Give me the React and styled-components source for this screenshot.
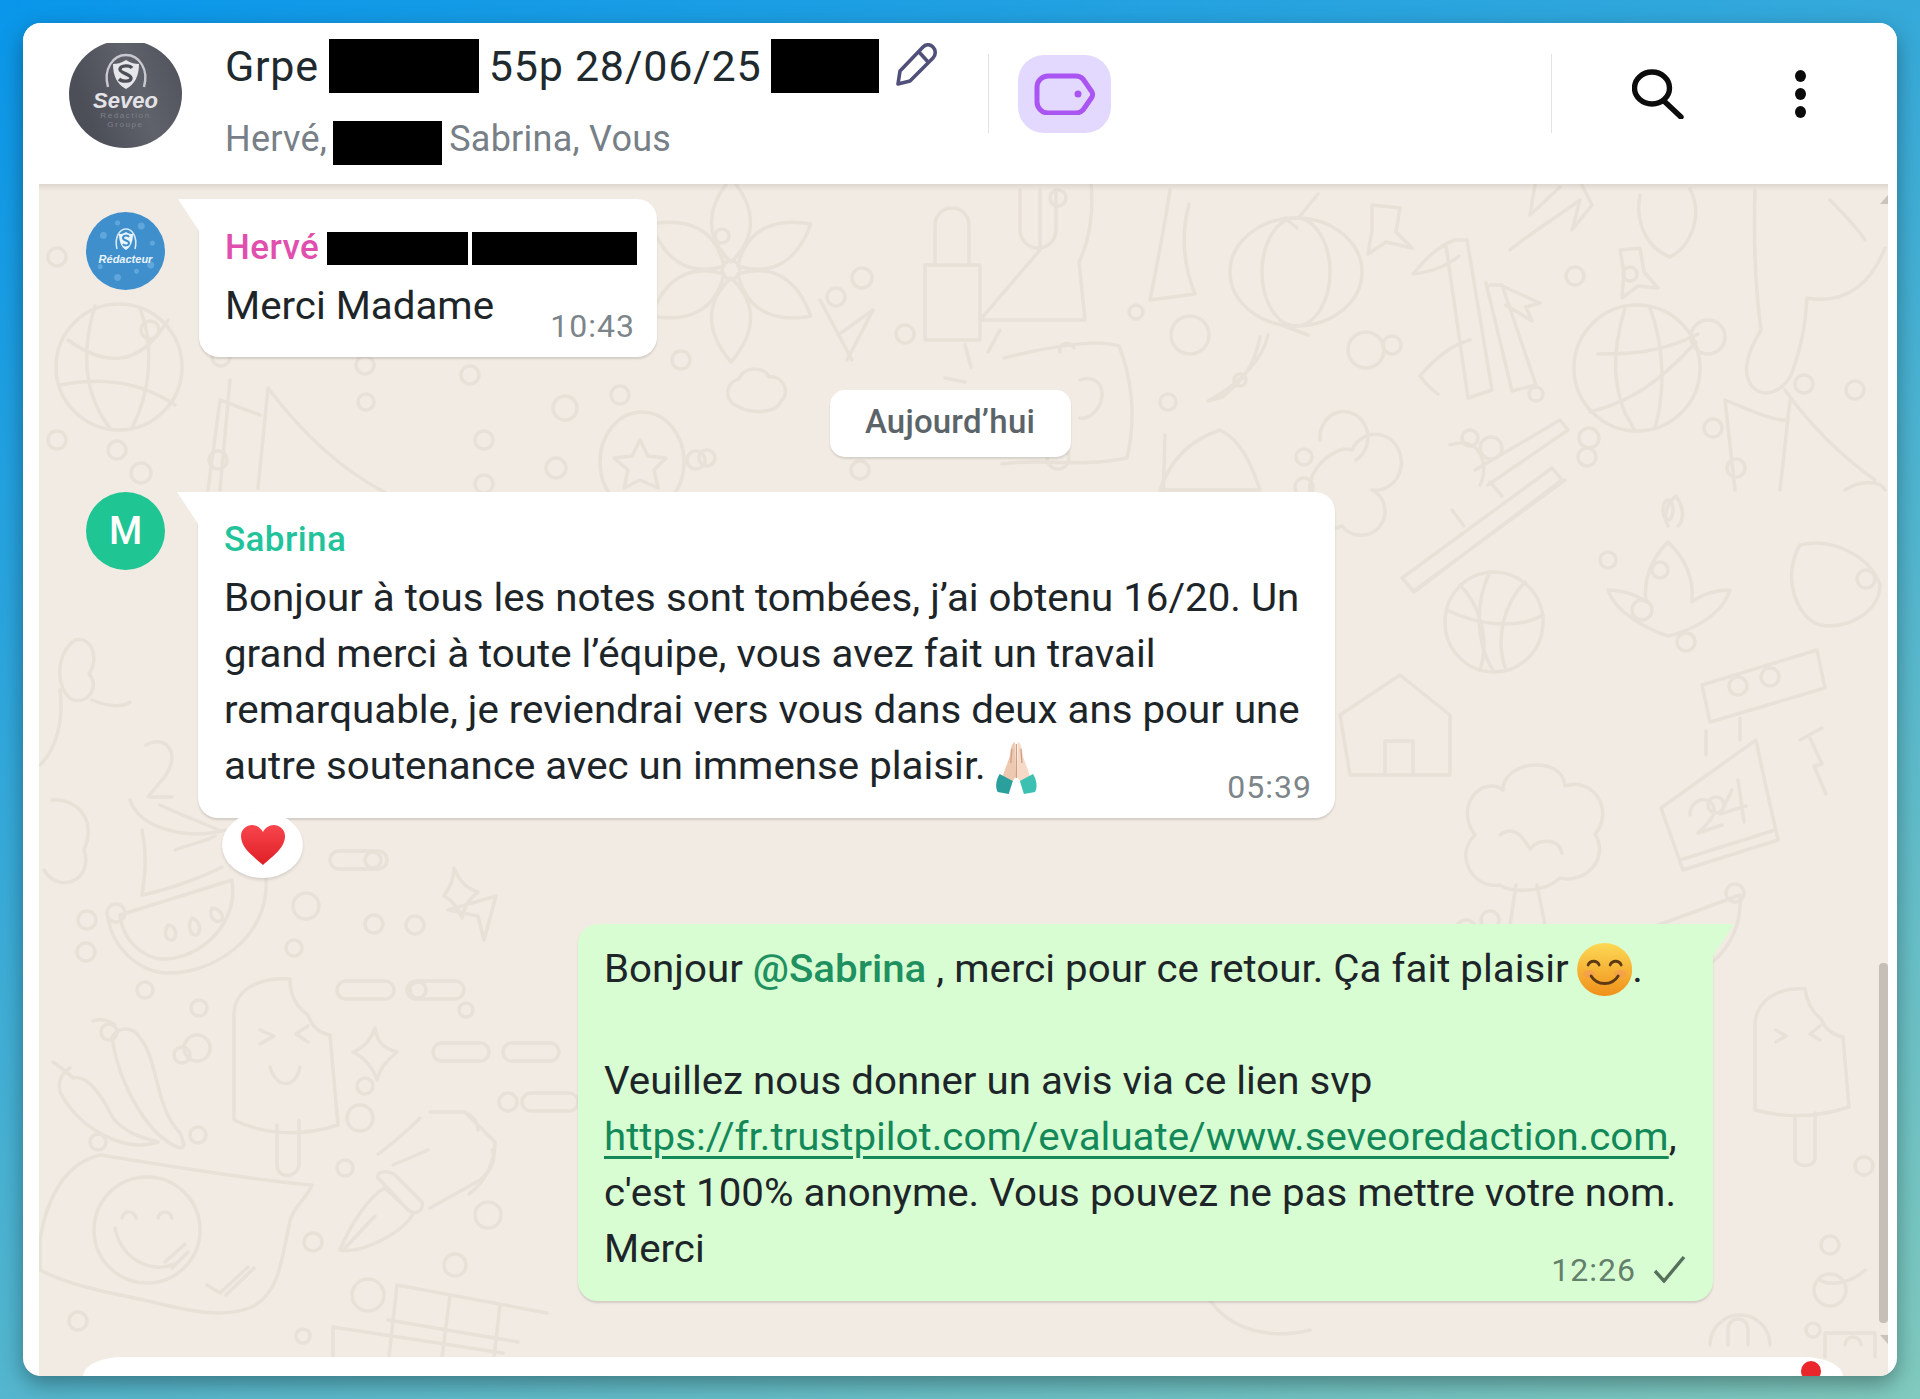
import React from "react";
import styled, { createGlobalStyle } from "styled-components";

const Global = createGlobalStyle`
  html, body { margin: 0; padding: 0; }
  body { font-family: Roboto, "Noto Sans", sans-serif; color: #1d2529; }
  * { box-sizing: border-box; }
`;

const Page = styled.div`
  height: 1399px;
  padding: 23px;
  background: linear-gradient(157deg, #0996ea 0%, #80cabe 100%);
  overflow: hidden;
`;
const Card = styled.main`
  height: 1353px;
  display: flex;
  flex-direction: column;
  padding: 0 9px 0 16px;
  background: #fff;
  border-radius: 18px;
  overflow: hidden;
  box-shadow: 0 8px 22px rgba(0, 0, 0, 0.35);
`;
const Header = styled.header`
  flex: 0 0 161px;
  display: flex;
  align-items: flex-start;
  margin: 0 -9px 0 -16px;
  padding: 0 91px 0 46px;
  background: #fff;
`;
const LogoClip = styled.div`
  flex: 0 0 113px;
  height: 105px;
  margin-top: 20px;
  overflow: hidden;
`;
const SeveoLogo = styled.div`
  width: 113px;
  height: 108px;
  margin-top: -3px;
  padding-top: 13px;
  border-radius: 50%;
  display: flex;
  flex-direction: column;
  align-items: center;
  background: linear-gradient(70deg, #4d4f58 20%, #5f616b 60%, #4f515a 100%);
`;
const SeveoName = styled.span`
  font: italic 700 22px/20px "Liberation Sans", sans-serif;
  color: #e4e4e8;
  margin-top: 2px;
`;
const SeveoSmall = styled.span`
  font: 400 8px/9px "Liberation Sans", sans-serif;
  letter-spacing: 1.6px;
  color: #7f818b;
`;
const TitleCol = styled.div`
  flex: 0 0 715px;
  min-width: 0;
  margin-left: 43px;
  padding-top: 16px;
`;
const TitleRow = styled.div`
  display: flex;
  align-items: center;
  height: 54px;
  font-size: 43px;
  letter-spacing: 0.75px;
  line-height: 54px;
  color: #202a2e;
  white-space: nowrap;
`;
const SubRow = styled.div`
  display: flex;
  align-items: flex-start;
  height: 44px;
  margin-top: 28px;
  font-size: 36px;
  letter-spacing: 0.25px;
  line-height: 36px;
  color: #778087;
  white-space: nowrap;
`;
const Redact = styled.span`
  flex: none;
  display: block;
  width: ${(p) => p.$w}px;
  height: ${(p) => p.$h}px;
  margin: 0 ${(p) => p.$mr ?? 10}px 0 ${(p) => p.$ml ?? 10}px;
  background: #000;
`;
const PencilIcon = styled.svg`
  flex: none;
  margin: -2px 0 0 16px;
`;
const Actions = styled.div`
  flex: 1;
  height: 79px;
  margin-top: 31px;
  display: flex;
  align-items: center;
`;
const Divider = styled.span`
  flex: none;
  width: 1px;
  height: 79px;
  background: #e1e3e4;
  margin-left: ${(p) => p.$ml || 0}px;
`;
const TagButton = styled.span`
  flex: none;
  width: 93px;
  height: 78px;
  margin-left: 29px;
  border-radius: 26px;
  background: #e3d9ff;
  display: flex;
  align-items: center;
  justify-content: center;
`;
const Spacer = styled.span`
  flex: 1;
`;
const SearchIcon = styled.svg`
  flex: none;
  margin-left: 80px;
`;
const Dots = styled.span`
  flex: none;
  margin-left: 111px;
  display: flex;
  flex-direction: column;
  gap: 6px;
  & > i {
    display: block;
    width: 11px;
    height: 12px;
    border-radius: 50%;
    background: #0b0b0b;
  }
`;

const Chat = styled.section`
  position: relative;
  flex: 1;
  overflow: hidden;
  display: flex;
  flex-direction: column;
  padding-top: 15px;
  background: #f1ebe4;
  &::after {
    content: "";
    position: absolute;
    left: 0;
    right: 0;
    top: 0;
    height: 7px;
    background: linear-gradient(rgba(90, 80, 70, 0.13), rgba(90, 80, 70, 0));
  }
`;
const Doodle = styled.svg`
  position: absolute;
  left: 0;
  top: 0;
  width: 1849px;
  height: 1192px;
  fill: none;
  stroke: #e8e1d8;
  stroke-width: 3.5;
  stroke-linecap: round;
  stroke-linejoin: round;
`;
const Row = styled.div`
  position: relative;
  display: flex;
  align-items: flex-start;
  margin-top: ${(p) => p.$mt || 0}px;
  padding-left: 47px;
`;
const Avatar = styled.div`
  flex: none;
  width: 79px;
  height: 78px;
  margin-top: ${(p) => p.$mt || 0}px;
  margin-right: ${(p) => p.$mr}px;
  border-radius: 50%;
  display: flex;
  flex-direction: column;
  align-items: center;
  justify-content: center;
  background: ${(p) => p.$bg};
  color: #fff;
`;
const SpeckledAvatar = styled(Avatar)`
  background:
    radial-gradient(circle at 22% 30%, #5ea6db 0 3px, transparent 4px),
    radial-gradient(circle at 40% 14%, #5ea6db 0 2px, transparent 3px),
    radial-gradient(circle at 70% 18%, #5ea6db 0 3px, transparent 4px),
    radial-gradient(circle at 84% 40%, #5ea6db 0 2px, transparent 3px),
    radial-gradient(circle at 18% 70%, #5ea6db 0 2px, transparent 3px),
    radial-gradient(circle at 40% 84%, #5ea6db 0 3px, transparent 4px),
    radial-gradient(circle at 64% 76%, #5ea6db 0 2px, transparent 3px),
    radial-gradient(circle at 82% 68%, #5ea6db 0 3px, transparent 4px),
    #3f8fcc;
`;
const AvatarInitial = styled.span`
  font-size: 38px;
  font-weight: 500;
  line-height: 1;
`;
const RedacteurText = styled.span`
  font: italic 700 11px/12px "Liberation Sans", sans-serif;
  color: #eaf4fb;
  margin-bottom: 10px;
`;
const Bubble = styled.article`
  position: relative;
  width: ${(p) => p.$w}px;
  padding: ${(p) => p.$pt || 28}px 26px ${(p) => p.$pb || 24}px;
  border-radius: 20px;
  border-top-left-radius: ${(p) => (p.$out ? "20px" : "0")};
  border-top-right-radius: ${(p) => (p.$out ? "0" : "20px")};
  background: ${(p) => (p.$out ? "#d9fdd3" : "#fff")};
  box-shadow: 0 2px 2px rgba(60, 50, 40, 0.16);
  &::before {
    content: "";
    position: absolute;
    top: 0;
    ${(p) => (p.$out ? "left: 100%;" : "right: 100%;")}
    width: 21px;
    height: 32px;
    background: inherit;
    clip-path: ${(p) =>
      p.$out
        ? "polygon(0 0, 100% 0, 0 100%)"
        : "polygon(0 0, 100% 0, 100% 100%)"};
  }
`;
const OutRow = styled.div`
  display: flex;
  justify-content: flex-end;
  position: relative;
  margin-top: 106px;
  padding-right: 175px;
`;
const Sender = styled.div`
  display: flex;
  align-items: center;
  height: 40px;
  margin-bottom: 10px;
  font-size: 35px;
  letter-spacing: 0.4px;
  font-weight: 500;
  line-height: 40px;
  color: ${(p) => p.$c};
`;
const Body = styled.div`
  font-size: 38px;
  line-height: 56px;
  white-space: pre-line;
  color: #1d2529;
  transform: scaleX(1.06);
  transform-origin: left center;
`;
const InlineEmoji = styled.svg`
  vertical-align: ${(p) => p.$va}px;
  margin-left: ${(p) => p.$ml}px;
`;
const Meta = styled.span`
  position: absolute;
  right: ${(p) => p.$r}px;
  bottom: 11px;
  display: flex;
  align-items: center;
  font-size: 32px;
  letter-spacing: 1px;
  line-height: 40px;
  color: ${(p) => p.$c || "#7c8589"};
`;
const CheckIcon = styled.svg`
  margin-left: 17px;
  margin-top: -2px;
`;
const Mention = styled.span`
  font-weight: 500;
  color: #1f9160;
`;
const Link = styled.a`
  color: #13895a;
  text-decoration: underline;
  text-decoration-thickness: 3px;
  text-underline-offset: 6px;
`;
const DateRow = styled.div`
  position: relative;
  display: flex;
  justify-content: center;
  margin: 33px 0 35px;
  padding-right: 27px;
`;
const DateChip = styled.span`
  width: 241px;
  height: 67px;
  border-radius: 15px;
  background: #fff;
  font-size: 33px;
  letter-spacing: 0.2px;
  font-weight: 500;
  line-height: 64px;
  text-align: center;
  color: #5b6469;
  box-shadow: 0 2px 2px rgba(60, 50, 40, 0.14);
`;
const Reaction = styled.span`
  position: absolute;
  left: 24px;
  top: calc(100% - 6px);
  width: 81px;
  height: 66px;
  border-radius: 50%;
  background: #fff;
  display: flex;
  align-items: center;
  justify-content: center;
  box-shadow: 0 2px 3px rgba(60, 50, 40, 0.14);
`;
const ScrollArrow = styled.span`
  position: absolute;
  right: 0;
  top: ${(p) => p.$top}px;
  width: 8px;
  height: 9px;
  background: #c9c3bb;
  clip-path: ${(p) =>
    p.$down ? "polygon(0 0, 100% 0, 100% 100%)" : "polygon(100% 0, 100% 100%, 0 100%)"};
`;
const ScrollThumb = styled.span`
  position: absolute;
  right: 0;
  top: 779px;
  width: 9px;
  height: 360px;
  border-radius: 4px;
  background: #c5bfb8;
`;
const Composer = styled.div`
  position: absolute;
  left: 44px;
  right: 45px;
  bottom: 0;
  height: 19px;
  border-radius: 40px 40px 0 0 / 19px 19px 0 0;
  background: #fff;
`;
const RedDot = styled.span`
  position: absolute;
  right: 22px;
  top: 4px;
  width: 20px;
  height: 20px;
  border-radius: 50%;
  background: #e8262c;
`;

const circles = [
  [57,257,9],[57,440,9],[141,473,10],[117,450,9],[218,460,9],[150,330,9],[221,357,9],[365,365,9],[366,402,8],
  [395,235,7],[365,330,9],[470,375,9],[484,440,9],[484,484,9],[556,468,10],[565,408,12],[620,395,9],[696,460,9],
  [681,360,9],[707,458,8],[722,236,7],[862,278,10],[846,405,9],[836,297,9],[905,334,9],[860,470,9],
  [1058,198,8],[1136,312,7],[1190,335,19],[1058,458,11],[1168,402,8],[1304,457,8],[1392,345,9],[1366,350,18],
  [1304,487,9],[1491,448,11],[1536,394,7],[1589,438,10],[1575,276,9],[1630,274,7],[1708,337,17],[1713,428,9],
  [1804,384,9],[1736,468,9],[1855,390,9],[1866,579,9],[1470,438,8],[1587,457,9],[1686,642,9],[1608,560,8],
  [1240,380,6],[1660,570,8],[1642,610,10],[1466,930,10],[1716,805,8],[1735,893,9],[1480,1130,9],[1490,920,9],
  [116,913,9],[87,920,9],[86,952,9],[182,1055,8],[109,1032,8],[306,906,13],[294,948,8],[145,990,8],[199,1008,8],
  [98,1142,8],[198,1135,8],[197,1048,13],[466,1010,7],[373,860,8],[374,924,9],[415,925,9],[418,990,8],
  [365,1086,8],[360,1118,13],[345,1168,8],[508,1102,9],[78,1321,9],[313,1242,9],[368,1295,16],
  [455,1265,11],[488,1215,13],[303,1336,7],[1830,1245,9],[1813,1330,7],[1864,1166,9],[1830,1290,16],[1615,1170,8],
  [1420,1230,7],[1270,1040,7],[1110,1040,8],[1020,1040,7],[845,1040,9],
];
const pills = [
  [330,860,57],[337,990,57],[407,990,57],[433,1052,56],[503,1052,56],[522,1102,56],[1500,1120,56],[1590,1045,50],
];

function Doodles() {
  return (
    <Doodle viewBox="39 184 1849 1192" aria-hidden="true">
      {circles.map(([x, y, r], i) => (
        <circle key={i} cx={x} cy={y} r={r} />
      ))}
      {pills.map(([x, y, w], i) => (
        <rect key={i} x={x} y={y - 9} width={w} height={18} rx={9} />
      ))}
      {/* left globe */}
      <ellipse cx="119" cy="367" rx="63" ry="63" />
      <path d="M68 340c35 25 70 30 100-20M60 385c40-8 80-4 115 20M95 306c-15 50-10 90 15 122M140 308c15 40 10 85-8 120" />
      {/* flower */}
      {[0, 60, 120, 180, 240, 300].map((r) => (
        <path key={r} d="M731 262c-28-26-24-56 0-84 24 28 28 58 0 84z" transform={`rotate(${r} 731 270)`} />
      ))}
      <circle cx="731" cy="270" r="9" />
      {/* cactus pot and boot */}
      <path d="M925 265h55v75h-55zM935 265v-40a17 17 0 0 1 34 0v40M1040 190v60l-60 70h105l-6-58c10-20 15-50 12-78M1020 190v40a18 18 0 0 0 36 0v-40" />
      <path d="M1170 190c-6 40-14 80-20 110l45-6c-12-30-14-60-6-90" />
      {/* lantern */}
      <ellipse cx="1296" cy="272" rx="66" ry="54" />
      <ellipse cx="1296" cy="272" rx="34" ry="54" />
      <path d="M1285 218l12 10M1300 216l18-22M1282 325l26 10M1268 335c-5 25-30 50-60 66l14-4c20-15 32-30 38-60" />
      <path d="M1372 205l28 3-4 24 16 16-26-6-18 12 4-24z" />
      {/* bamboo */}
      <path d="M1455 240l12 0 25 150 -24 8-22-152M1490 285l12 0 34 100-24 6-26-108M1455 240c-18 6-32 22-42 34 18-2 34-8 46-18M1470 340c-22 6-40 24-50 36 6 8 12 14 18 18M1500 285l40 18-14 4 6 14-26-16" />
      {/* right globe */}
      <ellipse cx="1637" cy="368" rx="63" ry="63" />
      <path d="M1598 354c30 0 60 0 100-20M1590 412c40-10 70-30 106-70M1625 308c-15 50-10 80 0 105l10 18M1650 308c15 40 15 85 5 120" />
      {/* leaf, stocking */}
      <path d="M1510 250c25-20 50-35 70-50l-8 30 20-25-10-20M1535 185l-5 30 30-28" />
      <path d="M1755 190c-2 60 2 110 6 140-12 20-20 40-10 55 12 16 35 6 42-15 8-25 12-40 14-72 30 5 60-5 78-50M1830 200c10 10 25 25 35 40" />
      <path d="M1640 195c-6 30 10 55 30 62 20-10 34-40 20-68" />
      <path d="M1620 250l20-2 4 24 14 16-20-2-16 12 2-26z" />
      {/* triangle notes */}
      <path d="M208 490l12-90 40 15M268 388l-10 100M268 388c30 40 70 80 118 105M230 380l-10 110" />
      {/* star circle */}
      <ellipse cx="642" cy="462" rx="42" ry="50" />
      <path d="M640 440l8 16 18 2-12 12 4 18-18-8-16 8 4-18-14-12 18-2z" />
      {/* cloud */}
      <path d="M735 405a14 14 0 0 1 4-26c4-12 24-14 30-2 14-2 22 16 12 24-4 12-30 14-46 4z" />
      {/* cross and rays */}
      <path d="M838 335l35-25 -26 50M820 300l32 60M965 345l6 22M1000 330l-12 22M945 378l20 4" />
      {/* radio near date */}
      <path d="M1004 358c40-10 90-20 115-12 12 30 18 70 8 112-50 10-90 0-125 6M1060 352c-3-8 10-12 14-4M1080 380c10-4 22 0 22 14s-12 26-22 24" />
      {/* tent + hand */}
      <path d="M1165 435l-2 65M1220 430c-30 10-50 30-60 60h100c-10-30-20-50-40-60z" />
      <path d="M1320 440a24 26 0 1 1 36 20M1352 450a26 28 0 1 1 20 40 24 24 0 1 1-30 36c-20 10-40-20-30-50 10-20 30-30 40-26z" />
      {/* chopsticks */}
      <path d="M1402 578l150-110 10 12-148 112zM1415 590l150-110M1452 510l12 16M1490 482l12 14" />
      <path d="M1450 445c30-10 40 20 30 40M1475 470l85-50 8 10-80 55" />
      {/* note right */}
      <path d="M1725 400l10 90M1725 400c25 10 45 20 60 20M1785 390c25 35 55 65 90 90M1790 400l-10 90" />
      <path d="M1845 490c15-10 35-10 40 0" />
      {/* basket ball */}
      <ellipse cx="1494" cy="622" rx="49" ry="50" />
      <path d="M1447 610c30 15 70 20 96 5M1490 572c-15 30-15 70 4 100M1460 585c20 20 30 55 20 85M1525 582c-20 20-30 55-20 85" />
      {/* lotus */}
      <path d="M1608 590c10 30 60 46 60 46s50-10 62-46c-15 0-30 5-38 12 2-25-8-45-24-60-15 15-25 35-22 60-10-8-25-12-38-12z" />
      <path d="M1668 526c-6-10 0-24 8-30 6 8 10 22 2 30" />
      <ellipse cx="1668" cy="510" rx="5" ry="10" />
      {/* right fruit */}
      <path d="M1800 545c30-8 70 10 80 40 0 25-30 45-60 40-25-8-38-50-20-80z" />
      {/* domino */}
      <path d="M1702 685l115-35 8 38-115 34z" />
      <circle cx="1738" cy="686" r="9" /><circle cx="1770" cy="677" r="9" />
      {/* house */}
      <path d="M1340 715l60-40 50 40v60h-100zM1385 775v-34h28v34" />
      {/* big flower */}
      <path d="M1510 925l6-40M1545 925l-8-40M1500 885c-28 4-46-30-25-50-22-30 8-60 28-45 0-30 60-35 62-4 28-10 50 25 30 48 15 25-10 50-35 44-15 15-50 15-60 7z" />
      <path d="M1500 835c15-12 25 6 30 14 8-10 28-12 32 4" />
      {/* calendar 24 */}
      <path d="M1661 808l95-68c8 40 20 90 22 100l-95 30zM1680 860l95-30M1706 755v-24M1740 740v-22" />
      <path d="M1690 815c0-18 22-20 24-6 1 8-8 16-16 24l24-8M1732 790l-12 24 26-8M1738 780l6 42" />
      <path d="M1810 738l12 26-8 2 12 28M1800 740l22-12" />
      {/* watermelon left */}
      <path d="M120 915L232 880C240 930 190 965 155 958C135 952 122 935 120 915z" />
      <path d="M266 878C270 940 210 975 165 973C135 970 112 945 108 918" />
      <path d="M168 925c-6 10 0 18 6 14 4-6 0-14-6-14zM192 918c-6 10 0 20 6 16 4-6 0-14-6-16zM212 908c-4 10 4 16 10 12 2-6-4-12-10-12z" />
      {/* watermelon right */}
      <path d="M1590 950l150-55c4 60-50 90-90 95-35 0-60-20-60-40zM1640 942l-5 14M1680 925l-6 14" />
      {/* popsicle */}
      <path d="M234 1120V1015c0-25 24-38 56-36 0 16 6 28 18 36 4 12 12 18 22 20l8 90c-30 10-70 12-104-5zM277 1125v40c0 14 20 14 22 0v-45" />
      <path d="M260 1030l14 6-14 8M308 1026l-12 8 12 8M270 1067c6 22 26 22 30 0" />
      {/* popsicle right */}
      <path d="M1755 1110v-85c0-25 24-38 50-36 2 14 8 24 16 30 4 10 12 16 22 18l6 70c-30 10-60 12-94 3zM1795 1118v40c0 10 20 10 20 0v-45" />
      <path d="M1776 1030l10 6-10 6M1820 1026l-10 8 10 6" />
      {/* chillies */}
      <path d="M112 1038c4-10 20-14 28 0 18 20 15 70 40 95 5 12 5 14 0 15-30-10-60-60-68-110zM115 1025c-8-6-16-6-22-4" />
      <path d="M53 1062c8 6 14 10 20 16 15-4 30 20 40 40 12 15 30 20 45 24-35 12-80-15-98-50-2-10 0-18 10-24" />
      {/* sparkles */}
      <path d="M375 1028c2 14 8 20 22 24-10 8-18 18-20 28-4-12-12-22-24-28 10-4 18-12 22-24z" />
      <path d="M454 868c6 14 12 20 24 24-8 6-14 14-16 26-4-10-10-18-18-22 6-8 10-18 10-28z" />
      {/* plane */}
      <path d="M448 910l48-14-12 44-6-24z" />
      {/* pie, cake left */}
      <path d="M142 830c6 30 2 50 0 65 30-6 65-20 80-28M160 805c20 10 50 20 60 26M175 850c15-6 30-8 40-14" />
      <path d="M52 800c25-2 45 20 32 50 10 30-25 45-40 20" />
      {/* 2 candle */}
      <path d="M146 745c16-10 36 4 20 30l-18 22h24M130 800c10 30 60 40 95 30" />
      <path d="M75 640c18-4 24 20 14 34 10 10 2 30-16 26-16-8-20-44 2-60zM60 690c4 30-4 60-20 75M92 700c14 6 30 8 38 2" />
      {/* lower blob + smiley */}
      <path d="M40 1240c8-50 30-78 60-85 65 10 150 25 212 30-6 14-20 24-22 36-8 36-10 70-36 85-30 14-70 4-110-6-40-8-78-16-104-30z" />
      <circle cx="147" cy="1230" r="53" />
      <path d="M122 1218c2-8 12-8 14 0M158 1218c2-8 12-8 14 0M115 1228c6 30 34 46 60 36" />
      <path d="M165 1262l20-18M172 1268l16-16" />
      <path d="M207 1285l13 8 28-26M226 1295l28-27" />
      {/* nib */}
      <path d="M340 1250c10-25 30-55 45-62l28 26c-10 18-50 40-73 36zM345 1248l30-32M378 1178l30 32c8 6 16 0 14-8l-28-28c-8-4-18-2-16 4zM393 1165l35-15M430 1208l50-28c14-12 16-24 12-30" />
      {/* notebook */}
      <path d="M333 1357v-30l170 26M397 1285l-8 72M397 1285l150 28M450 1295l-8 62M500 1305l-6 52M388 1320l130 22" />
      {/* mug */}
      <path d="M420 1118c-10 10-30 28-42 36M465 1112l30 30c0 20-10 40-26 52M430 1112l34 0c10 4 14 10 14 18" />
      {/* right lower */}
      <path d="M1570 1190c20 30 30 60 20 90M1210 1300c20 30 60 40 100 30" />
      <path d="M1820 1280c10 6 30 4 45-10" />
      <path d="M1440 1250l12 8 26-24M1460 1260l26-24" />
      <path d="M1710 1345a30 30 0 1 1 60 0M1728 1345v-16a10 10 0 0 1 20 0v16M1825 1357v-24h50v24M1845 1345a8 8 0 1 1 16 0" />
    </Doodle>
  );
}

const Pray = () => (
  <InlineEmoji $va={-15} $ml={8} width="41" height="53" viewBox="0 0 43 53" preserveAspectRatio="none">
    <path d="M20 1c-3 1-4 6-5 14-2 8-6 14-7 22l8 5 5-6z" fill="#eec8b0" />
    <path d="M23 1c3 1 4 6 5 14 2 8 6 14 7 22l-8 5-5-6z" fill="#f6d9c6" />
    <path d="M21.500 3v34M17 8l-1 14M26 8l1 14" stroke="#cf9f84" strokeWidth="1.3" fill="none" />
    <path d="M5 33l13 7-4 13-11-2c-3-6-1-13 2-18z" fill="#2a9f9c" />
    <path d="M38 33l-13 7 4 13 11-2c3-6 1-13-2-18z" fill="#3cc0b2" />
  </InlineEmoji>
);
const Smile = () => (
  <InlineEmoji $va={-14} $ml={8} width="52" height="53" viewBox="0 0 55 53" preserveAspectRatio="none">
    <defs>
      <linearGradient id="sm" x1="0" y1="0" x2="0" y2="1">
        <stop offset="0" stopColor="#fdd955" />
        <stop offset="1" stopColor="#f0901a" />
      </linearGradient>
    </defs>
    <ellipse cx="27.500" cy="26.500" rx="27.500" ry="26.500" fill="url(#sm)" />
    <ellipse cx="12" cy="31" rx="6" ry="4" fill="#f49a55" opacity=".6" />
    <ellipse cx="43" cy="31" rx="6" ry="4" fill="#f49a55" opacity=".6" />
    <g fill="none" stroke="#5d3a12" strokeWidth="2.8" strokeLinecap="round">
      <path d="M11 22c2-5 9-5 11 0M33 22c2-5 9-5 11 0M14 33c6 10 21 10 27 0" />
    </g>
  </InlineEmoji>
);

export default function App() {
  return (
    <Page>
      <Global />
      <Card>
        <Header>
          <LogoClip>
            <SeveoLogo>
              <svg width="46" height="36" viewBox="0 0 46 36" fill="none">
                <path d="M5 34C0 16 10 2 23 2s23 14 18 32" stroke="#c8c9ce" strokeWidth="2.4" />
                <path d="M23 7c5 3 9 4 13 4 0 12-4 20-13 25-9-5-13-13-13-25 4 0 8-1 13-4z" fill="#e6e6ea" />
                <path d="M29 15c-2-3-11-3-12 1s11 5 11 9-9 4-12 1" stroke="#4d4f58" strokeWidth="3.4" />
              </svg>
              <SeveoName>Seveo</SeveoName>
              <SeveoSmall>Rédaction</SeveoSmall>
              <SeveoSmall>Groupe</SeveoSmall>
            </SeveoLogo>
          </LogoClip>
          <TitleCol>
            <TitleRow>
              Grpe
              <Redact $w={150} $h={54} />
              55p 28/06/25
              <Redact $w={108} $h={54} $mr={0} />
              <PencilIcon width="43" height="44" viewBox="0 0 43 44" fill="none" stroke="#50507a" strokeWidth="3.6" strokeLinejoin="round">
                <path d="M3 41l2-13L28 4c3-3 7-3 10 0s3 8 0 11L15 38z" />
                <path d="M24 9l10 11" />
              </PencilIcon>
            </TitleRow>
            <SubRow>
              Hervé,
              <Redact $w={109} $h={44} $ml={6} $mr={7} />
              Sabrina, Vous
            </SubRow>
          </TitleCol>
          <Actions>
            <Divider $ml={48} />
            <TagButton>
              <svg width="62" height="42" viewBox="0 0 62 42" fill="none" stroke="#aa55f2" strokeWidth="5" strokeLinejoin="round">
                <path d="M14 3h28c3 0 5 1 7 3l9 13c1 2 1 3 0 5l-9 13c-2 2-4 3-7 3H14C8 40 3 35 3 29V14C3 8 8 3 14 3z" />
                <circle cx="44" cy="21" r="3.5" fill="#aa55f2" stroke="none" />
              </svg>
            </TagButton>
            <Spacer />
            <Divider />
            <SearchIcon width="52" height="50" viewBox="0 0 52 50" fill="none" stroke="#0c0c0c" strokeWidth="5.4" strokeLinecap="round">
              <ellipse cx="20" cy="19" rx="17.5" ry="16" />
              <path d="M32 32l17 16" />
            </SearchIcon>
            <Dots><i /><i /><i /></Dots>
          </Actions>
        </Header>
        <Chat>
          <Doodles />
          <Row>
            <SpeckledAvatar $mt={13} $mr={34}>
              <svg width="24" height="26" viewBox="0 0 24 26" fill="none">
                <path d="M3 22C0 10 6 2 12 2s12 8 9 20" stroke="#d7e9f6" strokeWidth="1.6" />
                <path d="M12 5c3 2 5 2 7 2 0 7-2 13-7 16-5-3-7-9-7-16 2 0 4 0 7-2z" fill="#e9f4fb" />
                <path d="M15 10c-1-2-6-2-6 1s6 2 6 5-5 3-6 1" stroke="#3f8fcc" strokeWidth="2" />
              </svg>
              <RedacteurText>Rédacteur</RedacteurText>
            </SpeckledAvatar>
            <Bubble $w={458} $pt={29} $pb={23}>
              <Sender $c="#e04fae">
                Hervé
                <Redact $w={141} $h={33} $mr={0} $ml={8} />
                <Redact $w={165} $h={33} $mr={0} $ml={4} />
              </Sender>
              <Body>Merci Madame</Body>
              <Meta $r={22}>10:43</Meta>
            </Bubble>
          </Row>
          <DateRow>
            <DateChip>Aujourd’hui</DateChip>
          </DateRow>
          <Row>
            <Avatar $bg="#1fc592" $mr={33}>
              <AvatarInitial>M</AvatarInitial>
            </Avatar>
            <Bubble $w={1137}>
              <Sender $c="#22c39b">Sabrina</Sender>
              <Body>
                {"Bonjour à tous les notes sont tombées, j’ai obtenu 16/20. Un\ngrand merci à toute l’équipe, vous avez fait un travail\nremarquable, je reviendrai vers vous dans deux ans pour une\nautre soutenance avec un immense plaisir."}
                <Pray />
              </Body>
              <Meta $r={23}>05:39</Meta>
              <Reaction>
                <svg width="44" height="40" viewBox="0 0 44 40">
                  <defs>
                    <linearGradient id="hr" x1="0" y1="0" x2="0" y2="1">
                      <stop offset="0" stopColor="#f8454c" />
                      <stop offset="1" stopColor="#df1f26" />
                    </linearGradient>
                  </defs>
                  <path d="M22 40C12 31 0 23 0 11 0 4 6 0 11 0c5 0 9 3 11 7 2-4 6-7 11-7 5 0 11 4 11 11 0 12-12 20-22 29z" fill="url(#hr)" />
                </svg>
              </Reaction>
            </Bubble>
          </Row>
          <OutRow>
            <Bubble $out $w={1135} $pt={17}>
              <Body>
                Bonjour <Mention>@Sabrina</Mention> , merci pour ce retour. Ça fait plaisir
                <Smile />.
                {"\n\nVeuillez nous donner un avis via ce lien svp\n"}
                <Link>https://fr.trustpilot.com/evaluate/www.seveoredaction.com</Link>
                {",\nc'est 100% anonyme. Vous pouvez ne pas mettre votre nom.\nMerci"}
              </Body>
              <Meta $r={27} $c="#63806c">
                12:26
                <CheckIcon width="33" height="28" viewBox="0 0 33 28" fill="none" stroke="#56705c" strokeWidth="3.4">
                  <path d="M2 16l9 10L31 2" />
                </CheckIcon>
              </Meta>
            </Bubble>
          </OutRow>
          <ScrollArrow $top={11} />
          <ScrollThumb />
          <ScrollArrow $down $top={1151} />
          <Composer>
            <RedDot />
          </Composer>
        </Chat>
      </Card>
    </Page>
  );
}
